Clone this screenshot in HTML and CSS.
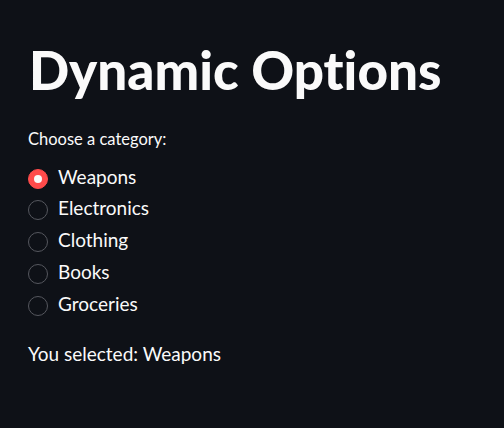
FILE: index.html
```html
<!DOCTYPE html>
<html lang="en">
<head>
    <meta charset="UTF-8">
    <meta name="viewport" content="width=device-width, initial-scale=1.0">
    <title>Dynamic Options</title>
    <link rel="stylesheet" href="styles.css">
</head>
<body>
    <div class="main">
        <h1>Dynamic Options</h1>

        <div class="radio-group">
            <p class="label">Choose a category:</p>
            <div class="options">
                <label class="option checked">
                    <span class="dot"></span>
                    <span class="text">Weapons</span>
                </label>
                <label class="option">
                    <span class="dot"></span>
                    <span class="text">Electronics</span>
                </label>
                <label class="option">
                    <span class="dot"></span>
                    <span class="text">Clothing</span>
                </label>
                <label class="option">
                    <span class="dot"></span>
                    <span class="text">Books</span>
                </label>
                <label class="option">
                    <span class="dot"></span>
                    <span class="text">Groceries</span>
                </label>
            </div>
        </div>

        <p class="result">You selected: Weapons</p>
    </div>
</body>
</html>
```

FILE: styles.css
```css
* {
    margin: 0;
    padding: 0;
    box-sizing: border-box;
}

body {
    background-color: #0e1117;
    color: #fafafa;
    font-family: Lato, "Open Sans", sans-serif;
    font-variant-ligatures: none;
}

.main {
    padding: 37.7px 28px 0 28px;
}

h1 {
    font-size: 53px;
    font-weight: 900;
    line-height: 1.2;
    margin-left: 1px;
}

.label {
    font-size: 16.5px;
    line-height: 1.2;
    margin-top: 29px;
}

.options {
    display: flex;
    flex-direction: column;
    margin-top: 10.6px;
}

.option {
    display: flex;
    align-items: center;
    height: 31.75px;
    font-size: 19px;
    cursor: pointer;
}

.dot {
    width: 20px;
    height: 20px;
    border-radius: 50%;
    border: 1px solid #55575e;
    margin-top: 4.4px;
    margin-right: 10px;
    flex-shrink: 0;
}

.option.checked .dot {
    background: #ff4b4b;
    border-color: #ff4b4b;
    display: flex;
    align-items: center;
    justify-content: center;
}

.option.checked .dot::after {
    content: "";
    width: 8px;
    height: 8px;
    border-radius: 50%;
    background: #fafafa;
}

.text {
    line-height: 31.75px;
}

.result {
    font-size: 19px;
    line-height: 1.2;
    margin-top: 24px;
}
```
